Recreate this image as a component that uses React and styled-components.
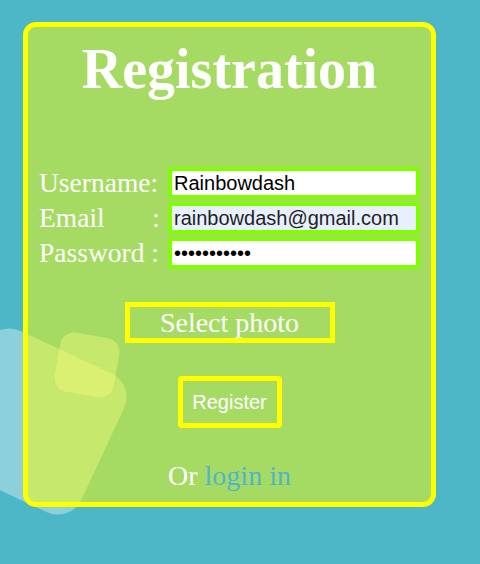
import React, { useState } from 'react';
import styled, { createGlobalStyle } from 'styled-components';

const GlobalStyle = createGlobalStyle`
  html, body {
    margin: 0;
    padding: 0;
    background-color: #4db7c7;
  }
  body {
    font-family: "Liberation Serif", "Times New Roman", serif;
  }
`;

const Page = styled.div`
  position: relative;
  width: 480px;
  height: 564px;
  overflow: hidden;
  padding: 22px 0 0 23px;
  box-sizing: border-box;
`;

const Shape = styled.div`
  position: absolute;
  left: ${(p) => p.$x - p.$size / 2}px;
  top: ${(p) => p.$y - p.$size / 2}px;
  width: ${(p) => p.$size}px;
  height: ${(p) => p.$size}px;
  border-radius: ${(p) => p.$radius}px;
  transform: rotate(${(p) => p.$rotate}deg);
  background-color: rgba(255, 255, 255, 0.35);
`;

const Card = styled.div`
  position: relative;
  z-index: 1;
  width: 413px;
  height: 485px;
  box-sizing: border-box;
  border: 5px solid #ffff00;
  border-radius: 13px;
  background-color: rgba(255, 255, 0, 0.5);
  padding: 11px 11px 0 11px;
  display: flex;
  flex-direction: column;
  align-items: center;
`;

const Title = styled.h1`
  margin: 0;
  font-size: 56px;
  font-weight: bold;
  color: #ffffff;
  line-height: 62px;
`;

const Form = styled.form`
  margin-top: 67px;
  align-self: stretch;
  display: flex;
  flex-direction: column;
  gap: 3px;
`;

const Row = styled.div`
  display: flex;
  align-items: center;
  gap: 8px;
`;

const Label = styled.label`
  width: 121px;
  display: flex;
  justify-content: space-between;
  font-size: 27.5px;
  line-height: 30px;
  color: #ffffff;
  white-space: pre;
`;

const Input = styled.input`
  width: 252px;
  height: 32px;
  box-sizing: border-box;
  border: 4px solid #7fff00;
  border-radius: 4px;
  padding: 1px 2px;
  font-family: "Liberation Sans", Arial, sans-serif;
  font-size: 20px;
  color: ${(p) => (p.$filled ? '#1f1f1f' : '#000000')};
  background-color: ${(p) => (p.$filled ? '#e8f0fe' : '#ffffff')};
  outline: none;
`;

const SelectPhoto = styled.label`
  margin-top: 33px;
  width: 210px;
  height: 41px;
  box-sizing: border-box;
  border: 5px solid #ffff00;
  display: flex;
  align-items: center;
  justify-content: center;
  font-size: 28px;
  color: #ffffff;
  cursor: pointer;
`;

const RegisterButton = styled.button`
  margin-top: 33px;
  width: 104px;
  height: 52px;
  box-sizing: border-box;
  border: 5px solid #ffff00;
  border-radius: 4px;
  background: transparent;
  color: #ffffff;
  font-family: "Liberation Sans", Arial, sans-serif;
  font-size: 20px;
  padding: 0;
  cursor: pointer;
`;

const Footer = styled.p`
  margin: 32px 0 0 0;
  font-size: 28px;
  line-height: 31px;
  color: #ffffff;
`;

const LoginLink = styled.a`
  color: #4fb5cc;
  text-decoration: none;
`;

function App() {
  const [username, setUsername] = useState('Rainbowdash');
  const [email, setEmail] = useState('rainbowdash@gmail.com');
  const [password, setPassword] = useState('rainbowdash');

  return (
    <Page>
      <GlobalStyle />
      <Shape $x={33} $y={421} $size={153} $radius={26} $rotate={25} />
      <Shape $x={87} $y={365} $size={60} $radius={14} $rotate={10} />
      <Card>
        <Title>Registration</Title>
        <Form onSubmit={(e) => e.preventDefault()}>
          <Row>
            <Label htmlFor="username">
              <span>Username:</span>
            </Label>
            <Input id="username" value={username} onChange={(e) => setUsername(e.target.value)} />
          </Row>
          <Row>
            <Label htmlFor="email">
              <span>Email</span>
              <span>:</span>
            </Label>
            <Input id="email" $filled value={email} onChange={(e) => setEmail(e.target.value)} />
          </Row>
          <Row>
            <Label htmlFor="password">
              <span>Password :</span>
            </Label>
            <Input
              id="password"
              type="password"
              value={password}
              onChange={(e) => setPassword(e.target.value)}
            />
          </Row>
        </Form>
        <SelectPhoto>Select photo</SelectPhoto>
        <RegisterButton type="button">Register</RegisterButton>
        <Footer>
          Or <LoginLink href="#">login in</LoginLink>
        </Footer>
      </Card>
    </Page>
  );
}

export default App;
